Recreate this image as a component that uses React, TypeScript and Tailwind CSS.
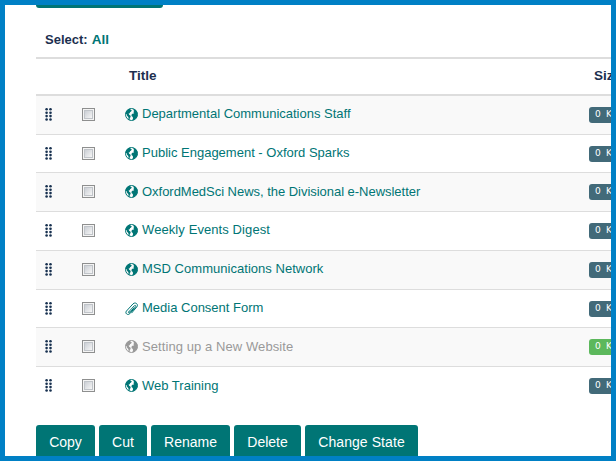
type Row = { title: string; h: string; text?: string; icon?: 'clip'; muted?: boolean };

const rows: Row[] = [
  { title: 'Departmental Communications Staff', h: 'h-[38px] pb-px', text: 'pb-px' },
  { title: 'Public Engagement - Oxford Sparks', h: 'h-[38px] border-t', text: 'pb-px' },
  { title: 'OxfordMedSci News, the Divisional e-Newsletter', h: 'h-[39px] border-t pb-px', text: 'pt-px tracking-[-0.03px]' },
  { title: 'Weekly Events Digest', h: 'h-[39px] border-t pb-px', text: 'pb-px tracking-[0.09px]' },
  { title: 'MSD Communications Network', h: 'h-[39px] border-t pb-px', text: 'pb-px tracking-[0.03px]' },
  { title: 'Media Consent Form', h: 'h-[38px] border-t', text: 'pb-px', icon: 'clip' },
  { title: 'Setting up a New Website', h: 'h-[39px] border-t pb-px', text: 'pt-px tracking-[0.08px]', muted: true },
  { title: 'Web Training', h: 'h-[39px] border-t pb-px', text: 'pt-px' },
];

const buttons = [
  { label: 'Copy', w: 'w-[59px]' },
  { label: 'Cut', w: 'w-12' },
  { label: 'Rename', w: 'w-[79px]' },
  { label: 'Delete', w: 'w-[67px]' },
  { label: 'Change State', w: 'w-[113px] tracking-[0.08px]' },
];

function Globe() {
  return (
    <svg className="shrink-0" width="13" height="13" viewBox="0 0 13 13" fill="currentColor">
      <circle cx="6.5" cy="6.5" r="6" fill="none" stroke="currentColor" strokeWidth="1" />
      <path d="M.6 6.2 1.2 3.2 3.2 1.2 5.4.5 5.2 1.6 6.8 2.2 6.1 3.5 5 4.2 4.8 5.3 3.6 5.5 4.2 6.8 5.6 7.7 5.6 9.1 4.7 10.3 4.9 11.9 3.5 11.2 3.4 9.3 2.1 7.8 1.7 6.2Z" />
      <path d="M8.3.7 10.8 2 12.3 4.6 12.4 7.8 11.2 10.3 8.9 12.1 7.4 12.3 8 10.5 7.8 8.9 6.5 7.9 6.6 6.4 7.9 5.5 9.2 5.4 8.4 4.1 9.2 3 8.4 2.1Z" />
    </svg>
  );
}

function Clip() {
  return (
    <svg className="shrink-0" width="13" height="14" viewBox="0 0 13 14" fill="none" stroke="currentColor" strokeWidth="1" strokeLinecap="round">
      <path d="M3.7 9.9 9.2 3.9C10.2 2.8 11.5 3.8 10.6 4.9L4.8 11.7C2.8 13.8-.4 11.3 1.4 9.1L8 1.9C10.3-.5 13.9 2.4 11.8 4.9L6.8 10.8" />
      <path d="M3.7 9.9C3 10.9 4.2 11.3 4.8 10.6L9 5.8" />
    </svg>
  );
}

function Handle() {
  return (
    <svg width="7" height="13" viewBox="0 0 7 13" fill="#17304f">
      {[0, 3.4, 6.8, 10.2].map((y) => (
        <g key={y}>
          <circle cx="1.6" cy={y + 1.3} r="1.3" />
          <circle cx="5.5" cy={y + 1.3} r="1.3" />
        </g>
      ))}
    </svg>
  );
}

export default function App() {
  return (
    <div className="box-border h-[461px] w-[616px] overflow-hidden border-[5px] border-[#0080c5] bg-white pl-[31px] font-['Liberation_Sans',Arial,sans-serif] text-[13px] text-[#1c2f4f]">
      <div className="h-[3px] w-[127px] rounded-b-[3px] bg-[#007575]" />
      <div className="flex h-[49px] items-center pt-[14px] pl-[9px] font-bold leading-4">
        Select:<span className="ml-1 text-[13.5px] text-[#007575]">All</span>
      </div>
      <div className="flex h-[39px] items-center border-y-2 border-[#dddddd] text-[13.5px] font-bold">
        <span className="ml-[93px] w-[465px] shrink-0">Title</span>
        <span className="shrink-0">Size</span>
      </div>
      <div>
        {rows.map((r) => (
          <div key={r.title} className={`flex items-center border-[#dddddd] odd:bg-[#f9f9f9] ${r.h}`}>
            <div className="ml-[9px] w-[37px] shrink-0"><Handle /></div>
            <div className="w-[43px] shrink-0">
              <div className="size-[13px] border border-[#8e8f8f] bg-[#f4f4f4] p-px">
                <div className="size-full border border-[#c0c4c9] bg-linear-to-br from-[#cbcfd5] to-[#f6f6f6]" />
              </div>
            </div>
            <div className={`flex w-[464px] shrink-0 items-center gap-1 leading-4 ${r.muted ? 'text-[#999999]' : 'text-[#007575]'}`}>
              {r.icon === 'clip' ? <Clip /> : <Globe />}
              <span className={`whitespace-nowrap ${r.text ?? ''}`}>{r.title}</span>
            </div>
            <div className={`mt-px flex h-4 w-10 shrink-0 items-center rounded-[3px] pl-1.5 font-['DejaVu_Sans',sans-serif] text-[9px] tracking-[1.2px] whitespace-pre text-white ${r.muted ? 'bg-[#5cb85c]' : 'bg-[#426a79]'}`}>
              0 KB
            </div>
          </div>
        ))}
      </div>
      <div className="mt-5 flex gap-1">
        {buttons.map((b) => (
          <button key={b.label} className={`h-[34px] shrink-0 rounded-[3px] bg-[#007575] text-sm whitespace-nowrap text-white ${b.w}`}>
            {b.label}
          </button>
        ))}
      </div>
    </div>
  );
}
